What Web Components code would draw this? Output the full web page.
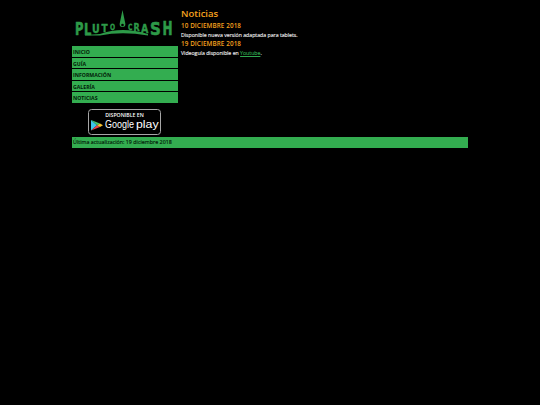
<!DOCTYPE html>
<html lang="es">
<head>
<meta charset="utf-8">
<title>Plutocrash</title>
<style>
  html, body { margin: 0; background: #000; }
</style>
</head>
<body>
<pluto-page>
  <pluto-logo slot="logo"></pluto-logo>
  <pluto-menu slot="menu">
    <pluto-item>INICIO</pluto-item>
    <pluto-item>GUÍA</pluto-item>
    <pluto-item>INFORMACIÓN</pluto-item>
    <pluto-item>GALERÍA</pluto-item>
    <pluto-item>NOTICIAS</pluto-item>
  </pluto-menu>
  <play-badge slot="badge"></play-badge>
  <h-news slot="content" heading="Noticias">
    <news-entry date="10 DICIEMBRE 2018">Disponible nueva versión adaptada para tablets.</news-entry>
    <news-entry date="19 DICIEMBRE 2018">Videoguía disponible en <a href="#" style="color:#2fa84f">Youtube</a>.</news-entry>
  </h-news>
  <span slot="footer">Última actualización: 19 diciembre 2018</span>
</pluto-page>

<script>
// page frame
class PlutoPage extends HTMLElement {
  constructor() {
    super();
    this.attachShadow({ mode: "open" }).innerHTML = `
    <style>
      :host { display: block; width: 396px; margin: 0 auto; font-family: "Open Sans", sans-serif; }
      #cols { display: grid; grid-template-columns: 106px 1fr; column-gap: 3px; height: 137px; }
      #left { display: flex; flex-direction: column; }
      #foot {
        height: 11px; background: #33ad50; color: #021a08;
        font-size: 5.3px; letter-spacing: .02px; line-height: 11px; padding-left: 1px;
        -webkit-text-stroke: .15px currentColor;
      }
    </style>
    <div id="cols">
      <div id="left">
        <slot name="logo"></slot>
        <slot name="menu"></slot>
        <slot name="badge"></slot>
      </div>
      <div><slot name="content"></slot></div>
    </div>
    <div id="foot"><slot name="footer"></slot></div>`;
  }
}

// logo, the lettering stays real text: letter, x, baseline, x scale, y scale
const logoLetters = [
  ["P", 3, 35, 1.15, 1.85],
  ["L", 12, 35, 1.15, 1.5],
  ["U", 20, 32.5, .95, 1.25],
  ["T", 29.5, 31.5, .9, 1],
  ["O", 38, 29.5, .6, .85],
  ["C", 56, 29.5, .6, .85],
  ["R", 61.5, 30.5, .8, 1],
  ["A", 69, 33, .95, 1.3],
  ["S", 78, 35, 1.5, 1.85],
  ["H", 90.5, 35, 1.2, 2]
];

class PlutoLogo extends HTMLElement {
  constructor() {
    super();
    const letters = logoLetters.map(([ch, x, y, sx, sy]) =>
      `<text transform="translate(${x} ${y}) scale(${sx} ${sy})" font-size="10">${ch}</text>`
    ).join("");
    this.attachShadow({ mode: "open" }).innerHTML = `
    <style>
      :host { display: block; height: 46px; }
      svg { display: block; }
      text { font-family: "DejaVu Sans", sans-serif; font-weight: 700; fill: #2d9a48; stroke: #2d9a48; stroke-width: .35; }
    </style>
    <svg width="106" height="46" viewBox="0 0 106 46">
      <path d="M13 35 L28 34 Q50 26 76 34 L76 35.500 Q50 31 28 35.500 L13 35.500 Z" fill="#2d9a48"/>
      <path d="M50.500 10 L53 22 Q54.500 27 50.500 27 Q46.500 27 48 22 Z" fill="#2d9a48"/>
      <circle cx="50.500" cy="25" r="1.300" fill="#000"/>
      ${letters}
    </svg>`;
  }
}

class PlutoMenu extends HTMLElement {
  constructor() {
    super();
    this.attachShadow({ mode: "open" }).innerHTML = `
    <style>
      :host { display: flex; flex-direction: column; gap: 1px; }
    </style>
    <slot></slot>`;
  }
}

class PlutoItem extends HTMLElement {
  constructor() {
    super();
    this.attachShadow({ mode: "open" }).innerHTML = `
    <style>
      :host {
        display: block; height: 10.6px; background: #33ad50; color: #021a08;
        font-size: 5.2px; font-weight: 700; line-height: 12px; padding-left: 1px;
      }
    </style>
    <slot></slot>`;
  }
}

class PlayBadge extends HTMLElement {
  constructor() {
    super();
    this.attachShadow({ mode: "open" }).innerHTML = `
    <style>
      :host { display: block; width: 73px; height: 26px; margin: 6px 0 0 16px; }
      svg { display: block; }
      text { fill: #fff; }
    </style>
    <svg width="73" height="26" viewBox="0 0 73 26">
      <rect x=".5" y=".5" width="72" height="25" rx="3" fill="#000" stroke="#a6a6a6"/>
      <text x="36.500" y="7.500" font-family="Open Sans" font-size="5.200" font-weight="600" text-anchor="middle">DISPONIBLE EN</text>
      <path d="M3 11 L9 16.200 L3 21.500 Z" fill="#3ec4e8"/>
      <path d="M3 11 L12 14.500 L9 16.200 Z" fill="#45c46c"/>
      <path d="M3 21.500 L12 18 L9 16.200 Z" fill="#e8434a"/>
      <path d="M12 14.500 L15 16.200 L12 18 L9 16.200 Z" fill="#f9c12e"/>
      <text transform="translate(17 19) scale(1 1.2)" font-family="Liberation Sans" font-size="9">Google</text>
      <text transform="translate(48 19) scale(1.3 1.1)" font-family="Liberation Sans" font-size="9.500">play</text>
    </svg>`;
  }
}

class HNews extends HTMLElement {
  constructor() {
    super();
    this.attachShadow({ mode: "open" }).innerHTML = `
    <style>
      :host { display: block; padding-top: 8px; }
      h1 { margin: 0 0 1px; color: #f5a11e; font-size: 9.5px; line-height: 12px; font-weight: 600; }
    </style>
    <h1></h1>
    <slot></slot>`;
    this.shadowRoot.querySelector("h1").textContent = this.getAttribute("heading");
  }
}

class NewsEntry extends HTMLElement {
  constructor() {
    super();
    this.attachShadow({ mode: "open" }).innerHTML = `
    <style>
      :host { display: block; height: 18px; }
      h2 { margin: 0; color: #f5a11e; font-size: 6.3px; letter-spacing: .1px; line-height: 10.5px; font-weight: 600; }
      p { margin: 0; color: #eee; font-size: 5.2px; line-height: 7px; -webkit-text-stroke: .12px currentColor; }
    </style>
    <h2></h2>
    <p><slot></slot></p>`;
    this.shadowRoot.querySelector("h2").textContent = this.getAttribute("date");
  }
}

customElements.define("pluto-page", PlutoPage);
customElements.define("pluto-logo", PlutoLogo);
customElements.define("pluto-menu", PlutoMenu);
customElements.define("pluto-item", PlutoItem);
customElements.define("play-badge", PlayBadge);
customElements.define("h-news", HNews);
customElements.define("news-entry", NewsEntry);
</script>
</body>
</html>
